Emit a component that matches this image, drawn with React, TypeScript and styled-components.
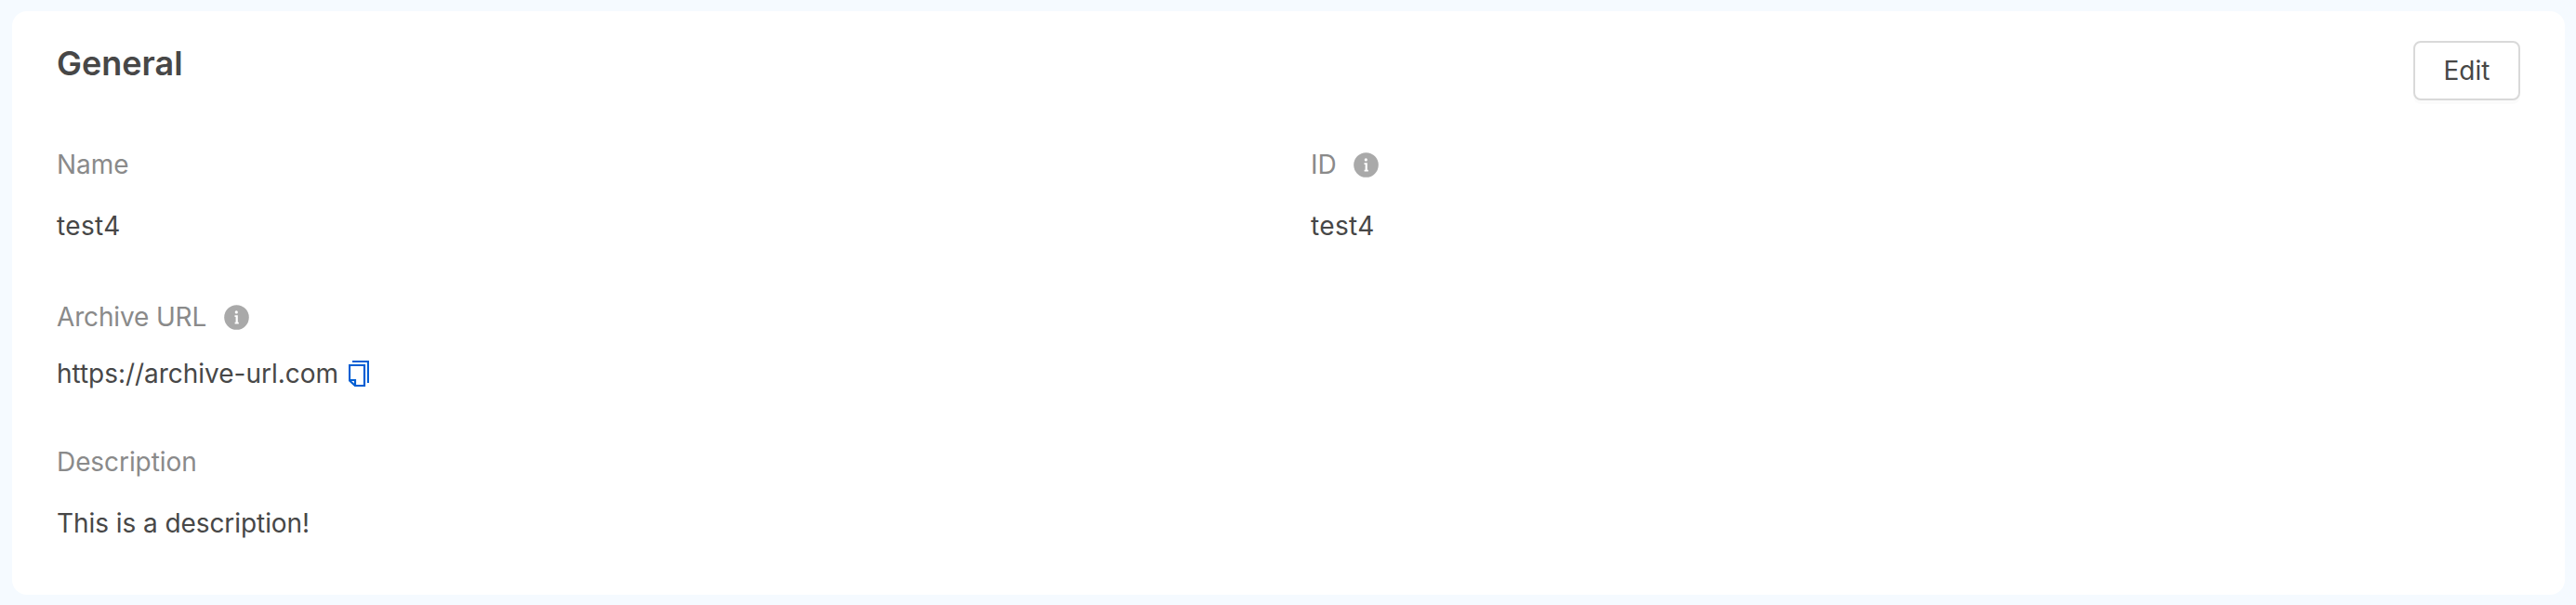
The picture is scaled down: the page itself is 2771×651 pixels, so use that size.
import React from "react";
import styled, { createGlobalStyle } from "styled-components";

const GlobalStyle = createGlobalStyle`
  * { box-sizing: border-box; }
  body {
    margin: 0;
    background: #f5faff;
    font-family: Inter, "Liberation Sans", sans-serif;
    font-size: 28px;
    line-height: 44px;
    color: #474747;
  }
`;

const Page = styled.main`
  height: 651px;
  padding: 12px 12px 11px 13px;
`;

const Card = styled.section`
  height: 628px;
  padding: 32px 48px 0;
  border-radius: 16px;
  background: #fff;
`;

const Header = styled.header`
  display: flex;
  justify-content: space-between;
  align-items: flex-start;
  height: 111px;
`;

const Title = styled.h2`
  margin: 2px 0 0;
  font-size: 36px;
  font-weight: 600;
  line-height: 44px;
`;

const EditButton = styled.button`
  width: 115px;
  height: 64px;
  padding: 0;
  border: 2px solid #d9d9d9;
  border-radius: 8px;
  background: #fff;
  box-shadow: 0 4px 0 rgba(0, 0, 0, 0.016);
  color: inherit;
  font: inherit;
`;

const Fields = styled.dl`
  display: grid;
  grid-template-columns: 1fr 1fr;
  column-gap: 48px;
  margin: 0;
`;

const Field = styled.div<{ $height: number; $wide?: boolean }>`
  height: ${(p) => p.$height}px;
  grid-column: ${(p) => (p.$wide ? "1 / -1" : "auto")};
`;

const Label = styled.dt<{ $track?: number }>`
  display: flex;
  align-items: center;
  gap: 18.6px;
  height: 44px;
  color: #8a8a8a;
  letter-spacing: ${(p) => p.$track ?? 0}px;
`;

const Value = styled.dd<{ $gap?: number; $track?: number }>`
  display: flex;
  align-items: center;
  gap: 11px;
  height: 44px;
  margin: ${(p) => p.$gap ?? 22}px 0 0;
  letter-spacing: ${(p) => p.$track ?? 0}px;
`;

const Icon = styled.svg`
  display: block;
  flex: none;
`;

const InfoIcon = () => (
  <Icon width="27" height="27" viewBox="0 0 27 27">
    <circle cx="13.5" cy="13.5" r="13.3" fill="#a9a9a9" />
    <circle cx="13.3" cy="7.9" r="1.6" fill="#fff" />
    <path d="M11.5 11.2H14.8V18.7H15.8V20.6H11.6V18.7H12.6V12.9H11.5Z" fill="#fff" />
  </Icon>
);

const CopyIcon = () => (
  <Icon width="22" height="28" viewBox="0 0 22 28" fill="none" stroke="#005ed3" strokeWidth="2.2">
    <path d="M4 1H21V24" />
    <path d="M1 5H17V27H7L1 21.5Z" />
    <path d="M1 21H7V27" />
  </Icon>
);

export default function App() {
  return (
    <>
      <GlobalStyle />
      <Page>
        <Card>
          <Header>
            <Title>General</Title>
            <EditButton type="button">Edit</EditButton>
          </Header>
          <Fields>
            <Field $height={164}>
              <Label>Name</Label>
              <Value $track={0.35}>test4</Value>
            </Field>
            <Field $height={164}>
              <Label>
                ID
                <InfoIcon />
              </Label>
              <Value $track={0.35}>test4</Value>
            </Field>
            <Field $height={156} $wide>
              <Label $track={-0.15}>
                Archive URL
                <InfoIcon />
              </Label>
              <Value $gap={17} $track={-0.03}>
                https://archive-url.com
                <CopyIcon />
              </Value>
            </Field>
            <Field $height={110} $wide>
              <Label $track={-0.08}>Description</Label>
              <Value $track={-0.07}>This is a description!</Value>
            </Field>
          </Fields>
        </Card>
      </Page>
    </>
  );
}
